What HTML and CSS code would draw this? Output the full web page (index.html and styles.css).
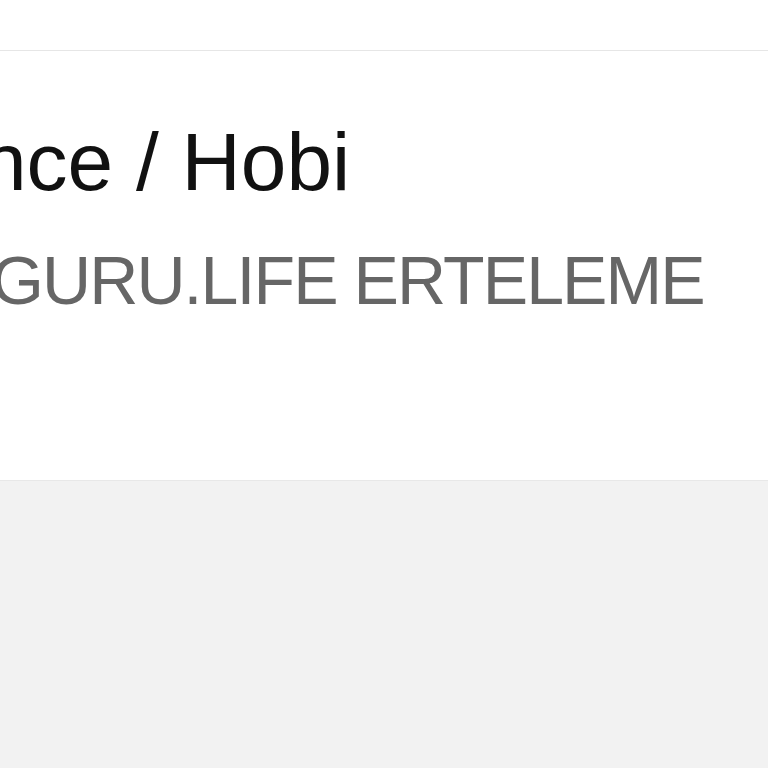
FILE: index.html
```html
<!DOCTYPE html>
<html lang="tr">
<head>
    <meta charset="UTF-8">
    <meta name="viewport" content="width=device-width, initial-scale=1.0">
    <title>Hobi</title>
    <link rel="stylesheet" href="styles.css">
</head>
<body>
    <!-- Top bar -->
    <div class="topbar"></div>

    <!-- Category card -->
    <div class="card">
        <div class="card-inner">
            <h1 class="title">nce / Hobi</h1>
            <p class="subtitle">GURU.LIFE ERTELEME</p>
        </div>
    </div>
</body>
</html>
```

FILE: styles.css
```css
body {
    margin: 0;
    background-color: #f2f2f2;
    font-family: "Liberation Sans", Arial, Helvetica, sans-serif;
}

.topbar {
    height: 50px;
    background: #fff;
    border-bottom: 1px solid #e6e6e6;
}

.card {
    height: 429px;
    background: #fff;
    border-bottom: 1px solid #e8e8e8;
    overflow: hidden;
}

.card-inner {
    padding-top: 70px;
    white-space: nowrap;
}

.title {
    margin: 0 0 0 -19px;
    font-size: 82px;
    font-weight: normal;
    line-height: 1;
    color: #111;
}

.subtitle {
    margin: 43px 0 0 -9px;
    font-size: 68px;
    line-height: 1;
    letter-spacing: -1.9px;
    color: #666;
}
```
